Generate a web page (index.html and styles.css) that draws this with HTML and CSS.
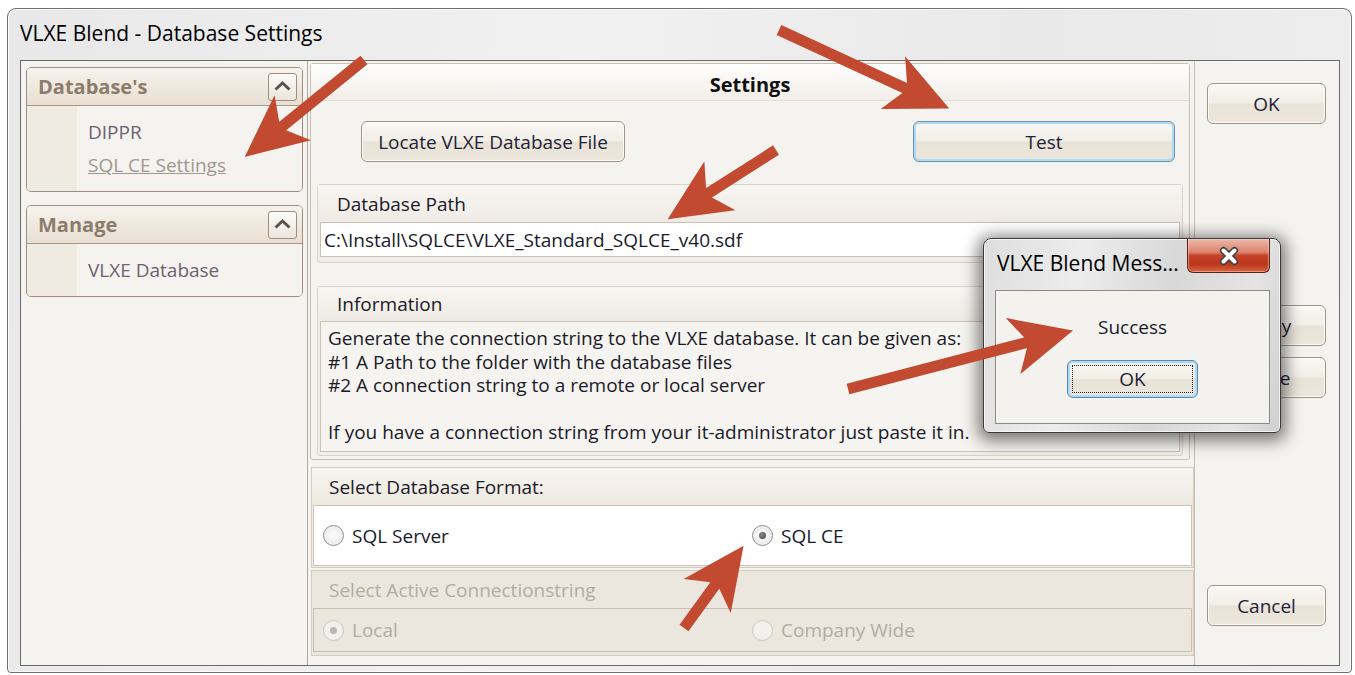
FILE: index.html
```html
<!DOCTYPE html>
<html lang="en">
<head>
<meta charset="utf-8">
<title>VLXE Blend - Database Settings</title>
<link rel="stylesheet" href="styles.css">
</head>
<body>
<div class="window">
  <div class="titlebar">VLXE Blend - Database Settings</div>
  <div class="client">
    <aside class="nav">
      <section class="navgroup">
        <header class="navgroup-head">
          <span>Database's</span>
          <span class="collapse"><svg width="29" height="28" viewBox="0 0 29 28"><path d="M7.5 16.5 L14.5 10 L21.5 16.5" fill="none" stroke="#5b524c" stroke-width="3"/></svg></span>
        </header>
        <ul class="navgroup-items">
          <li>DIPPR</li>
          <li class="current">SQL CE Settings</li>
        </ul>
      </section>
      <section class="navgroup">
        <header class="navgroup-head">
          <span>Manage</span>
          <span class="collapse"><svg width="29" height="28" viewBox="0 0 29 28"><path d="M7.5 16.5 L14.5 10 L21.5 16.5" fill="none" stroke="#5b524c" stroke-width="3"/></svg></span>
        </header>
        <ul class="navgroup-items">
          <li>VLXE Database</li>
        </ul>
      </section>
    </aside>

    <main class="content">
      <section class="settings">
        <header class="settings-head">Settings</header>
        <div class="settings-actions">
          <button class="btn btn-locate">Locate VLXE Database File</button>
          <button class="btn btn-test">Test</button>
        </div>
        <div class="group path-group">
          <div class="group-head">Database Path</div>
          <div class="path-field">C:\Install\SQLCE\VLXE_Standard_SQLCE_v40.sdf</div>
        </div>
        <div class="group info-group">
          <div class="group-head">Information</div>
          <div class="info-text">
            <div>Generate the connection string to the VLXE database. It can be given as:</div>
            <div>#1 A Path to the folder with the database files</div>
            <div>#2 A connection string to a remote or local server</div>
            <div class="blank"></div>
            <div>If you have a connection string from your it-administrator just paste it in.</div>
          </div>
        </div>
      </section>

      <section class="choice">
        <div class="choice-head">Select Database Format:</div>
        <div class="choice-body">
          <span class="radio"><span class="radio-mark"></span>SQL Server</span>
          <span class="radio checked"><span class="radio-mark"></span>SQL CE</span>
        </div>
      </section>

      <section class="choice disabled">
        <div class="choice-head">Select Active Connectionstring</div>
        <div class="choice-body">
          <span class="radio checked"><span class="radio-mark"></span>Local</span>
          <span class="radio"><span class="radio-mark"></span>Company Wide</span>
        </div>
      </section>
    </main>

    <aside class="actions">
      <button class="btn btn-side">OK</button>
      <button class="btn btn-side btn-apply">Apply</button>
      <button class="btn btn-side btn-close">Close</button>
      <button class="btn btn-side btn-cancel">Cancel</button>
    </aside>
  </div>
</div>

<div class="msgbox">
  <div class="msgbox-title">
    <span class="msgbox-caption">VLXE Blend Mess...</span>
    <span class="msgbox-close">
      <svg width="30" height="22" viewBox="0 0 30 22">
        <path d="M9.5 5.5 L20.5 16.5 M20.5 5.5 L9.5 16.5" stroke="#3d3d3d" stroke-width="7" stroke-linecap="round"/>
        <path d="M9.5 5.5 L20.5 16.5 M20.5 5.5 L9.5 16.5" stroke="#ffffff" stroke-width="4" stroke-linecap="round"/>
      </svg>
    </span>
  </div>
  <div class="msgbox-body">
    <div class="msgbox-text">Success</div>
    <button class="btn btn-default">OK</button>
  </div>
</div>

<svg class="marks" width="1355" height="675" viewBox="0 0 1355 675">
  <defs>
    <marker id="arrowhead" markerUnits="userSpaceOnUse" markerWidth="62" markerHeight="58" viewBox="0 0 62 58" refX="32" refY="29" orient="auto">
      <path d="M0 0 L62 29 L0 58 L16 29 Z" fill="#c14a30"/>
    </marker>
  </defs>
  <g stroke="#c14a30" stroke-width="11" fill="none" marker-end="url(#arrowhead)">
    <line x1="364" y1="60" x2="268" y2="138"/>
    <line x1="779" y1="30" x2="922" y2="96"/>
    <line x1="776" y1="150" x2="693" y2="203"/>
    <line x1="848" y1="389" x2="1044" y2="338"/>
    <line x1="684" y1="628" x2="726" y2="570"/>
  </g>
</svg>
</body>
</html>
```

FILE: styles.css
```css
* {
  box-sizing: border-box;
}

html,
body {
  margin: 0;
}

body {
  position: relative;
  width: 1355px;
  height: 675px;
  overflow: hidden;
  background: #ffffff;
  font-family: "Segoe UI", "Open Sans", "Noto Sans", sans-serif;
  font-size: 19px;
  color: #1a1a2a;
}

/* ---------- main window frame ---------- */
.window {
  margin: 8px 0 0 7px;
  width: 1345px;
  height: 665px;
  padding: 0 11px 0 12px;
  border: 1px solid #6f6f6f;
  border-radius: 9px 9px 4px 4px;
  background: linear-gradient(100deg, #e8e8e8, #f1f1f1 40%, #e9e9e9 70%, #eeeeee);
  box-shadow: inset 0 0 0 1px #fbfbfb;
  display: flex;
  flex-direction: column;
}

.titlebar {
  height: 51px;
  display: flex;
  align-items: center;
  padding-bottom: 3px;
  font-size: 21px;
  color: #000;
}

.client {
  height: 606px;
  border: 1px solid #6a6a6a;
  background: #f5f3ef;
  display: flex;
}

/* ---------- navigation column ---------- */
.nav {
  width: 287px;
  border-right: 1px solid #b4a89c;
  padding: 6px 4px 0 5px;
  display: flex;
  flex-direction: column;
  gap: 13px;
}

.navgroup {
  border: 1px solid #9f8e80;
  border-radius: 5px;
  overflow: hidden;
  background: #f5f3ef;
}

.navgroup-head {
  height: 38px;
  padding: 0 5px 0 11px;
  display: flex;
  align-items: center;
  justify-content: space-between;
  border-bottom: 1px solid #a99888;
  background: linear-gradient(#f6f2ec, #e8dfd2);
  font-weight: 700;
  font-size: 20px;
  color: #8d7c6b;
}

.collapse {
  width: 29px;
  height: 28px;
  border: 1px solid #9f8e80;
  border-radius: 3px;
  background: linear-gradient(#fcfbf9, #ebe5dc);
  display: flex;
}

.collapse svg {
  margin: -1px;
}

.navgroup-items {
  list-style: none;
  margin: 0;
  padding: 14px 0 14px 61px;
  background: linear-gradient(to right, #efeae2 50px, #f5f3ef 50px);
}

.navgroup-items li {
  height: 24px;
  line-height: 24px;
  color: #6c6271;
}

.navgroup-items li + li {
  margin-top: 9px;
}

.navgroup-items li.current {
  color: #a2978f;
  text-decoration: underline;
}

/* ---------- centre column ---------- */
.content {
  width: 886px;
  display: flex;
  flex-direction: column;
}

.settings {
  margin: 2px 4px 0 2px;
  height: 397px;
  border: 1px solid #cbc0b4;
  border-radius: 3px;
  display: flex;
  flex-direction: column;
}

.settings-head {
  height: 37px;
  padding-top: 6px;
  line-height: 30px;
  border-bottom: 1px solid #e4dcd1;
  background: linear-gradient(#fefefe, #f2eee8);
  text-align: center;
  font-weight: 700;
  font-size: 20px;
  color: #111;
}

.settings-actions {
  height: 83px;
  padding: 20px 14px 0 50px;
  display: flex;
  justify-content: space-between;
  align-items: flex-start;
}

.btn {
  height: 41px;
  padding: 0;
  border: 1px solid #a39385;
  border-radius: 6px;
  background: linear-gradient(#faf8f5, #f2eee8 48%, #e9e2d7 52%, #ece6dc);
  box-shadow: inset 0 0 0 1px #fdfcfa;
  font: inherit;
  color: #1e2238;
}

.btn-locate {
  width: 264px;
}

.btn-test {
  width: 262px;
  border-color: #7790a4;
  box-shadow: inset 0 0 0 2px #a9dbfa;
}

.group {
  margin: 0 6px;
  border: 1px solid #dad2c8;
  border-radius: 3px;
  background: #f1ede7;
}

.group-head {
  height: 37px;
  padding-left: 19px;
  display: flex;
  align-items: center;
  background: linear-gradient(#f8f6f3, #efeae3);
}

.path-group {
  height: 79px;
}

.path-field {
  margin: 0 2px;
  height: 35px;
  padding-left: 3px;
  border: 1px solid #c8bfb5;
  background: #ffffff;
  display: flex;
  align-items: center;
}

.info-group {
  margin-top: 23px;
  height: 170px;
}

.info-group .group-head {
  height: 34px;
}

.info-text {
  margin: 0 2px;
  height: 131px;
  padding: 5px 7px;
  border: 1px solid #cbc2b8;
  background: #f6f4f0;
  line-height: 23.5px;
}

.info-text .blank {
  height: 23.5px;
}

/* ---------- option panels ---------- */
.choice {
  margin: 7px 0 0 3px;
  height: 101px;
  border: 1px solid #d5ccc1;
  background: linear-gradient(#f8f6f2, #ede7de) top / 100% 38px no-repeat, #f0ece5;
}

.choice-head {
  height: 37px;
  padding-left: 17px;
  display: flex;
  align-items: center;
}

.choice-body {
  margin: 0 1px;
  height: 61px;
  padding-left: 9px;
  border: 1px solid #cdc4b9;
  background: #ffffff;
  display: grid;
  grid-template-columns: 429px 1fr;
  align-items: center;
}

.choice.disabled {
  margin-top: 2px;
  height: 86px;
  background: #ebe7df;
  color: #b3aca4;
}

.choice.disabled .choice-body {
  height: 44px;
  border-color: #c9c0b4;
  background: #ebe6de;
}

.radio {
  display: flex;
  align-items: center;
  gap: 8px;
}

.radio-mark {
  position: relative;
  width: 21px;
  height: 21px;
  border: 1px solid #8c8e90;
  border-radius: 50%;
  background: radial-gradient(circle at 50% 50%, #f8f8f8 30%, #dcdcdc);
  box-shadow: inset 0 0 0 1px #f6f6f6;
}

.radio.checked .radio-mark::after {
  content: "";
  position: absolute;
  left: 6px;
  top: 6px;
  width: 7px;
  height: 7px;
  border-radius: 50%;
  background: radial-gradient(circle at 40% 40%, #8a8a8a, #404040);
}

.disabled .radio-mark {
  border-color: #cbc5be;
  background: #f3f1ee;
  box-shadow: none;
}

.disabled .radio.checked .radio-mark::after {
  background: #bdb7b1;
}

/* ---------- dialog buttons column ---------- */
.actions {
  width: 145px;
  border-left: 1px solid #c8bdb1;
  padding: 22px 0 0 12px;
  display: flex;
  flex-direction: column;
}

.btn-side {
  width: 119px;
  flex: none;
}

.btn-apply {
  margin-top: 181px;
}

.btn-close {
  margin-top: 11px;
}

.btn-cancel {
  margin-top: 187px;
}

/* ---------- message box ---------- */
.msgbox {
  position: absolute;
  left: 983px;
  top: 238px;
  width: 298px;
  height: 195px;
  border: 1px solid #3a3a3a;
  border-radius: 8px 8px 6px 6px;
  background: linear-gradient(100deg, #dedede, #ececec 30%, #d8d8d8 60%, #e4e4e4 85%, #cfcfcf);
  box-shadow: inset 0 0 0 1px rgba(255, 255, 255, 0.7), 0 3px 16px 5px rgba(0, 0, 0, 0.5);
  display: flex;
  flex-direction: column;
}

.msgbox-title {
  height: 51px;
  display: flex;
  align-items: flex-start;
}

.msgbox-caption {
  padding: 12px 0 0 13px;
  line-height: 24px;
  font-size: 21px;
  color: #000;
  white-space: nowrap;
}

.msgbox-close {
  margin-left: auto;
  margin-right: 10px;
  flex: none;
  width: 83px;
  height: 34px;
  border: 1px solid #5b2418;
  border-top: none;
  border-radius: 0 0 6px 6px;
  background: linear-gradient(#ecb8aa, #dc836d 40%, #c6432a 50%, #b9361d 75%, #d9653f);
  box-shadow: inset 0 0 0 1px rgba(255, 220, 210, 0.45);
  display: flex;
  align-items: center;
  justify-content: center;
}

.msgbox-body {
  flex: 1;
  margin: 0 10px 8px 11px;
  padding-top: 24px;
  border: 1px solid #8a8a8a;
  background: #f4f2ee;
  display: flex;
  flex-direction: column;
  align-items: center;
}

.msgbox-text {
  line-height: 24px;
}

.btn-default {
  position: relative;
  margin-top: 21px;
  width: 131px;
  height: 38px;
  border-color: #5f87a5;
  box-shadow: inset 0 0 0 2px #a9dbfa;
}

.btn-default::after {
  content: "";
  position: absolute;
  inset: 4px;
  border: 1px dotted #222;
}

/* ---------- annotation arrows ---------- */
.marks {
  position: absolute;
  left: 0;
  top: 0;
  pointer-events: none;
}
```
